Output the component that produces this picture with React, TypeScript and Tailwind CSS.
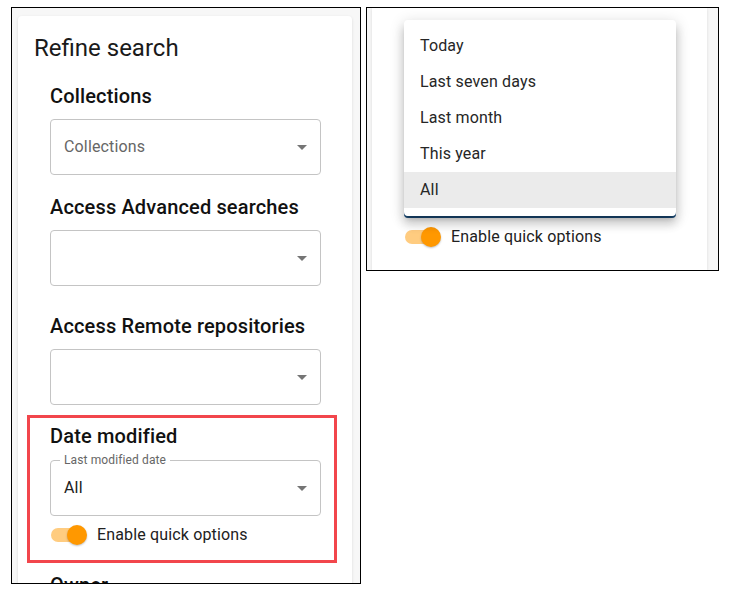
import React from 'react';

const ArrowDrop = () => (
  <svg viewBox="0 0 24 24" className="absolute right-[6px] top-1/2 -translate-y-1/2 w-6 h-6 fill-[#757575]">
    <path d="M7 10l5 5 5-5z" />
  </svg>
);

const Select = ({ value, placeholder, label }: { value?: string; placeholder?: string; label?: string }) => (
  <div className="relative h-[56px] w-[271px] rounded-[4px] border border-[#c4c4c4] flex items-center pl-[13px]">
    {label && (
      <span className="absolute left-[9px] -top-[9px] bg-white px-[4px] text-[12px] leading-[16px] tracking-[0.12px] text-[#666666]">
        {label}
      </span>
    )}
    {value && <span className="text-[16px] leading-6 tracking-[0.15px] text-[#212121]">{value}</span>}
    {placeholder && <span className="text-[16px] leading-6 tracking-[0.15px] text-[#666666]">{placeholder}</span>}
    <ArrowDrop />
  </div>
);

const Toggle = () => (
  <div className="flex items-center h-[38px]">
    <div className="relative w-[38px] h-[20px]">
      <div className="absolute left-[1px] top-[3px] w-[34px] h-[14px] rounded-full bg-[#ffcc80]" />
      <div className="absolute left-[17px] top-0 w-[20px] h-[20px] rounded-full bg-[#ff9800] shadow-[0_1px_2px_rgba(0,0,0,0.25)]" />
    </div>
    <span className="ml-[9px] text-[16px] leading-6 tracking-[0.15px] text-[#212121]">Enable quick options</span>
  </div>
);

const Heading = ({ children, className = '' }: { children: React.ReactNode; className?: string }) => (
  <h3 className={`text-[20px] leading-[28px] font-medium tracking-[0.15px] text-[#111111] ${className}`}>{children}</h3>
);

const menuItems = ['Today', 'Last seven days', 'Last month', 'This year', 'All'];

export default function App() {
  return (
    <div className="w-[730px] h-[595px] bg-white flex items-start gap-[5px] pl-[11px] pt-[7px] font-['Roboto',sans-serif]">
      {/* Left: refine search panel */}
      <div className="w-[350px] h-[577px] border border-black bg-[#f7f7f7] overflow-hidden pl-[6px] pt-[8px]">
        <div className="w-[334px] bg-white rounded-[4px] shadow-[0_1px_3px_rgba(0,0,0,0.12)] px-4 pt-4 pb-6">
          <h2 className="text-[24px] leading-[32px] text-[#1a1a1a]">Refine search</h2>
          <div className="ml-4 w-[271px]">
            <Heading className="mt-[18px]">Collections</Heading>
            <div className="mt-[9px]">
              <Select placeholder="Collections" />
            </div>

            <Heading className="mt-[18px]">Access Advanced searches</Heading>
            <div className="mt-[9px]">
              <Select />
            </div>

            <Heading className="mt-[26px]">Access Remote repositories</Heading>
            <div className="mt-[9px]">
              <Select />
            </div>

            {/* highlighted section */}
            <div className="mt-[10px] -ml-[23px] w-[310px] border-[3px] border-[#f2464c] pl-[20px] pt-[4px] pb-[6px]">
              <Heading>Date modified</Heading>
              <div className="mt-[10px]">
                <Select label="Last modified date" value="All" />
              </div>
              <Toggle />
            </div>

            <Heading className="mt-[8px]">Owner</Heading>
          </div>
        </div>
      </div>

      {/* Right: open date menu */}
      <div className="w-[353px] h-[264px] border border-black bg-[#f7f7f7] overflow-hidden pl-[5px]">
        <div className="relative w-[335px] h-full bg-white shadow-[0_1px_3px_rgba(0,0,0,0.12)] pl-[32px] pt-[154px]">
          {/* focused select, hidden under the menu except its bottom edge */}
          <div className="h-[56px] w-[272px] rounded-[4px] border-2 border-[#1c4f7e]" />
          <Toggle />

          <div className="absolute left-[32px] top-[12px] w-[272px] bg-white rounded-[4px] py-2 shadow-[0_5px_5px_-3px_rgba(0,0,0,0.2),0_8px_10px_1px_rgba(0,0,0,0.14),0_3px_14px_2px_rgba(0,0,0,0.12)]">
            {menuItems.map((item) => (
              <div
                key={item}
                className={`h-[36px] flex items-center px-4 text-[16px] leading-6 tracking-[0.15px] text-[#262626] ${item === 'All' ? 'bg-[#ebebeb]' : ''}`}
              >
                {item}
              </div>
            ))}
          </div>
        </div>
      </div>
    </div>
  );
}
